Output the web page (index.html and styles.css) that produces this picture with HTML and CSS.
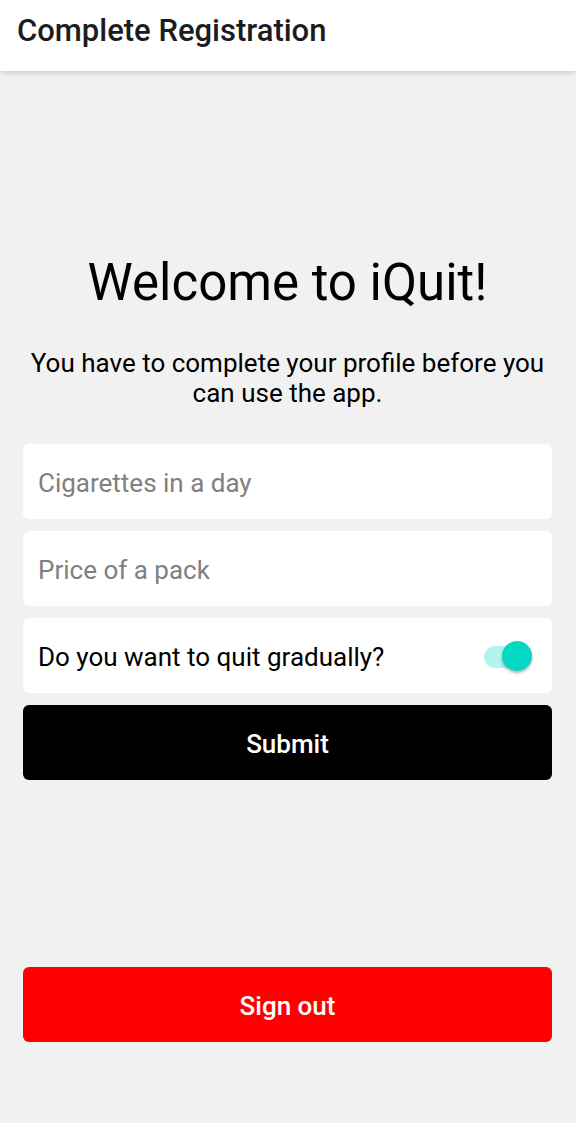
FILE: index.html
```html
<!DOCTYPE html>
<html lang="en">
<head>
<meta charset="utf-8">
<meta name="viewport" content="width=device-width, initial-scale=1">
<title>Complete Registration</title>
<link rel="stylesheet" href="styles.css">
</head>
<body>
<header class="app-bar"><h1 class="app-title">Complete Registration</h1></header>
<main class="screen">
  <form class="profile">
    <h2 class="welcome">Welcome to iQuit!</h2>
    <p class="intro">You have to complete your profile before you can use the app.</p>
    <input class="field" type="text" inputmode="numeric" aria-label="Cigarettes in a day" placeholder="Cigarettes in a day">
    <input class="field" type="text" inputmode="decimal" aria-label="Price of a pack" placeholder="Price of a pack">
    <label class="field toggle-row">
      <span>Do you want to quit gradually?</span>
      <input class="switch" type="checkbox" role="switch" checked>
    </label>
    <button class="button submit" type="submit">Submit</button>
  </form>
  <div class="account">
    <button class="button sign-out" type="button">Sign out</button>
  </div>
</main>
</body>
</html>
```

FILE: styles.css
```css
* {
  box-sizing: border-box;
}

body {
  display: flex;
  flex-direction: column;
  min-height: 100vh;
  margin: 0;
  background: #f1f1f1;
  color: #000;
  font-family: Roboto, "Noto Sans", sans-serif;
  font-size: 26px;
  line-height: 30px;
}

.app-bar {
  padding: 13px 17px 22px;
  background: #fff;
  box-shadow: 0 1px 6px rgba(0, 0, 0, 0.2);
}

.app-title {
  margin: 0;
  color: #1c1c1e;
  font-size: 31px;
  font-weight: 500;
  line-height: 36px;
}

.screen {
  display: flex;
  flex: 1;
  flex-direction: column;
  padding: 181px 24px 81px 23px;
}

.profile {
  display: flex;
  flex-direction: column;
  gap: 12px;
}

.welcome {
  margin: 0;
  font-size: 51px;
  font-weight: 400;
  line-height: 62px;
  text-align: center;
}

.intro {
  margin: 22px 0 24px;
  text-align: center;
}

.field {
  width: 100%;
  height: 75px;
  padding: 2px 15px 0;
  border: 0;
  border-radius: 6px;
  background: #fff;
  color: #000;
  font: inherit;
}

.field::placeholder {
  color: #808080;
  opacity: 1;
}

.toggle-row {
  display: flex;
  align-items: center;
  justify-content: space-between;
}

.switch {
  position: relative;
  width: 48px;
  height: 32px;
  margin: 0 5px 0 0;
  appearance: none;
}

.switch::before {
  position: absolute;
  inset: 5px 4px 5px 0;
  border-radius: 11px;
  background: #b2f3ed;
  content: "";
}

.switch::after {
  position: absolute;
  top: 0;
  right: 0;
  width: 30px;
  height: 30px;
  border-radius: 50%;
  background: #03d8c4;
  box-shadow: 0 2px 3px rgba(0, 0, 0, 0.3);
  content: "";
}

.button {
  width: 100%;
  height: 75px;
  padding: 2px 15px 0;
  border: 0;
  border-radius: 6px;
  color: #fff;
  font: inherit;
  font-weight: 500;
}

.submit {
  background: #000;
}

.account {
  margin-top: auto;
}

.sign-out {
  background: #f00;
}
```
